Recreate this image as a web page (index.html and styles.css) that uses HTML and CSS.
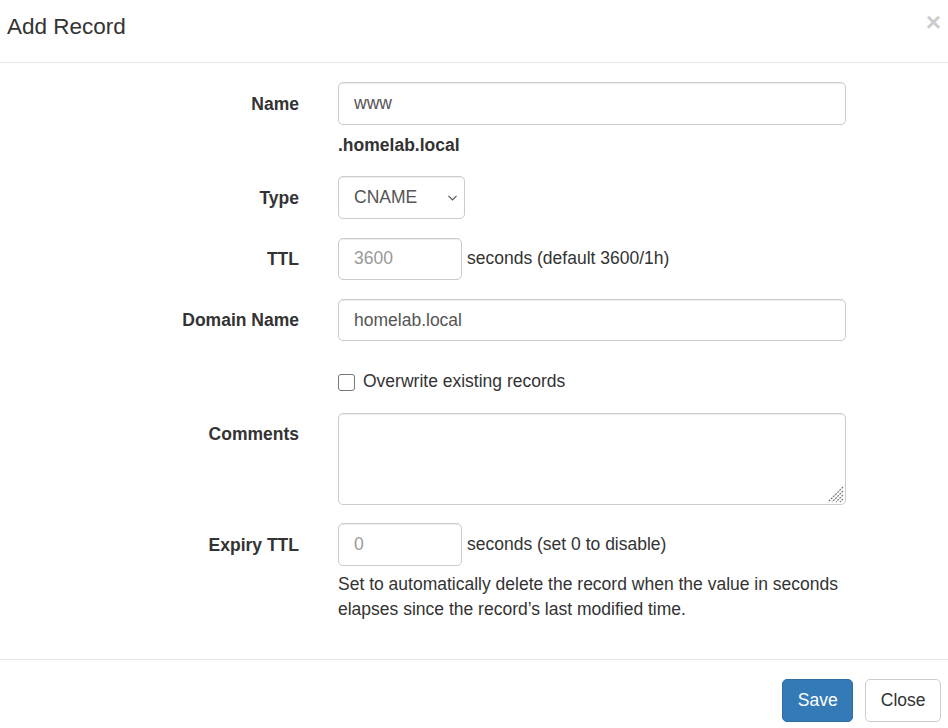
FILE: index.html
```html
<!DOCTYPE html>
<html lang="en">
<head>
<meta charset="utf-8">
<title>Add Record</title>
<link rel="stylesheet" href="styles.css">
</head>
<body>
<div class="modal">
  <div class="modal-header">
    <h4 class="modal-title">Add Record</h4>
    <button type="button" class="close">&times;</button>
  </div>
  <div class="modal-body">
    <form class="form-horizontal">
      <div class="form-group">
        <label class="control-label">Name</label>
        <div class="field">
          <input class="form-control" type="text" value="www">
          <div class="suffix">.homelab.local</div>
        </div>
      </div>
      <div class="form-group">
        <label class="control-label">Type</label>
        <div class="field">
          <div class="select-wrap">
            <select class="form-control select">
              <option>CNAME</option>
            </select>
            <svg class="chevron" width="9" height="6" viewBox="0 0 9 6"><path d="M0.5 0.8 L4.5 4.8 L8.5 0.8" fill="none" stroke="#555" stroke-width="1.2"/></svg>
          </div>
        </div>
      </div>
      <div class="form-group">
        <label class="control-label">TTL</label>
        <div class="field inline">
          <input class="form-control short" type="text" placeholder="3600">
          <span>seconds (default 3600/1h)</span>
        </div>
      </div>
      <div class="form-group">
        <label class="control-label">Domain Name</label>
        <div class="field">
          <input class="form-control" type="text" value="homelab.local">
        </div>
      </div>
      <div class="form-group">
        <div class="field checkbox">
          <label class="check-label"><input type="checkbox" class="check"> Overwrite existing records</label>
        </div>
      </div>
      <div class="form-group">
        <label class="control-label">Comments</label>
        <div class="field">
          <div class="area-wrap">
            <textarea class="form-control area" rows="3"></textarea>
            <svg class="grip" width="18" height="18" viewBox="0 0 18 18"><path d="M17 2 L2 17 M17 6 L6 17 M17 10 L10 17 M17 14 L14 17" fill="none" stroke="#7a7a7a" stroke-width="1.3" stroke-dasharray="2 1"/></svg>
          </div>
        </div>
      </div>
      <div class="form-group last">
        <label class="control-label">Expiry TTL</label>
        <div class="field">
          <div class="inline">
            <input class="form-control short" type="text" placeholder="0">
            <span>seconds (set 0 to disable)</span>
          </div>
          <p class="help-block">Set to automatically delete the record when the value in seconds elapses since the record’s last modified time.</p>
        </div>
      </div>
    </form>
  </div>
  <div class="modal-footer">
    <button type="button" class="btn btn-primary">Save</button>
    <button type="button" class="btn btn-default">Close</button>
  </div>
</div>
</body>
</html>
```

FILE: styles.css
```css
* {
  box-sizing: border-box;
}

body {
  margin: 0;
  background: #fff;
  color: #333;
  font-family: "Liberation Sans", Arial, sans-serif;
  font-size: 17.5px;
  line-height: 25px;
}

.modal {
  width: 948px;
}

.modal-header {
  display: flex;
  justify-content: space-between;
  align-items: flex-start;
  padding: 11px 7px 19px 7px;
  border-bottom: 1px solid #e5e5e5;
}

.modal-title {
  margin: 0;
  font-size: 22.5px;
  font-weight: normal;
  line-height: 32px;
}

.close {
  margin-top: -2px;
  padding: 0;
  border: 0;
  background: none;
  color: #000;
  opacity: 0.2;
  font-family: "Liberation Sans", Arial, sans-serif;
  font-size: 26.25px;
  font-weight: bold;
  line-height: 1;
}

.modal-body {
  padding: 19px 0 6px 0;
}

.form-horizontal {
  margin: 0;
}

.form-group {
  display: grid;
  grid-template-columns: 299px 508px;
  column-gap: 39px;
  margin-bottom: 18.75px;
}

.control-label {
  grid-column: 1;
  padding-top: 9.5px;
  text-align: right;
  font-weight: bold;
}

.field {
  grid-column: 2;
}

.form-control {
  display: block;
  width: 100%;
  height: 42.5px;
  padding: 7.5px 15px;
  border: 1px solid #ccc;
  border-radius: 5px;
  background: #fff;
  color: #555;
  font-family: inherit;
  font-size: 17.5px;
  line-height: 25px;
  box-shadow: inset 0 1px 1px rgba(0, 0, 0, 0.075);
}

.form-control::placeholder {
  color: #999;
}

.suffix {
  margin-top: 8px;
  font-weight: bold;
}

.select-wrap {
  position: relative;
  width: 127px;
}

.select {
  appearance: none;
  -webkit-appearance: none;
  padding-right: 28px;
}

.chevron {
  position: absolute;
  left: 110px;
  top: 19px;
}

.inline {
  display: flex;
  align-items: center;
  gap: 5px;
}

.short {
  width: 124px;
}

.checkbox {
  min-height: 33.75px;
  padding-top: 8.75px;
}

.check-label {
  display: flex;
  align-items: center;
  gap: 8px;
}

.check {
  appearance: none;
  -webkit-appearance: none;
  width: 17px;
  height: 17px;
  margin: 2px 0 0 0;
  border: 1px solid #767676;
  border-radius: 3px;
  background: #fff;
}

.area-wrap {
  position: relative;
}

.area {
  height: 92px;
  resize: none;
}

.grip {
  position: absolute;
  right: 2px;
  bottom: 2px;
}

.help-block {
  margin: 6.25px 0 12.5px 0;
  color: #333;
}

.modal-footer {
  display: flex;
  justify-content: flex-end;
  gap: 12px;
  padding: 18.75px 7px 7px 7px;
  border-top: 1px solid #e5e5e5;
}

.btn {
  height: 42.5px;
  padding: 7.5px 14.5px;
  border: 1px solid transparent;
  border-radius: 5px;
  font-family: inherit;
  font-size: 17.5px;
  line-height: 25px;
}

.btn-primary {
  background: #337ab7;
  border-color: #2e6da4;
  color: #fff;
}

.btn-default {
  background: #fff;
  border-color: #ccc;
  color: #333;
}
```
